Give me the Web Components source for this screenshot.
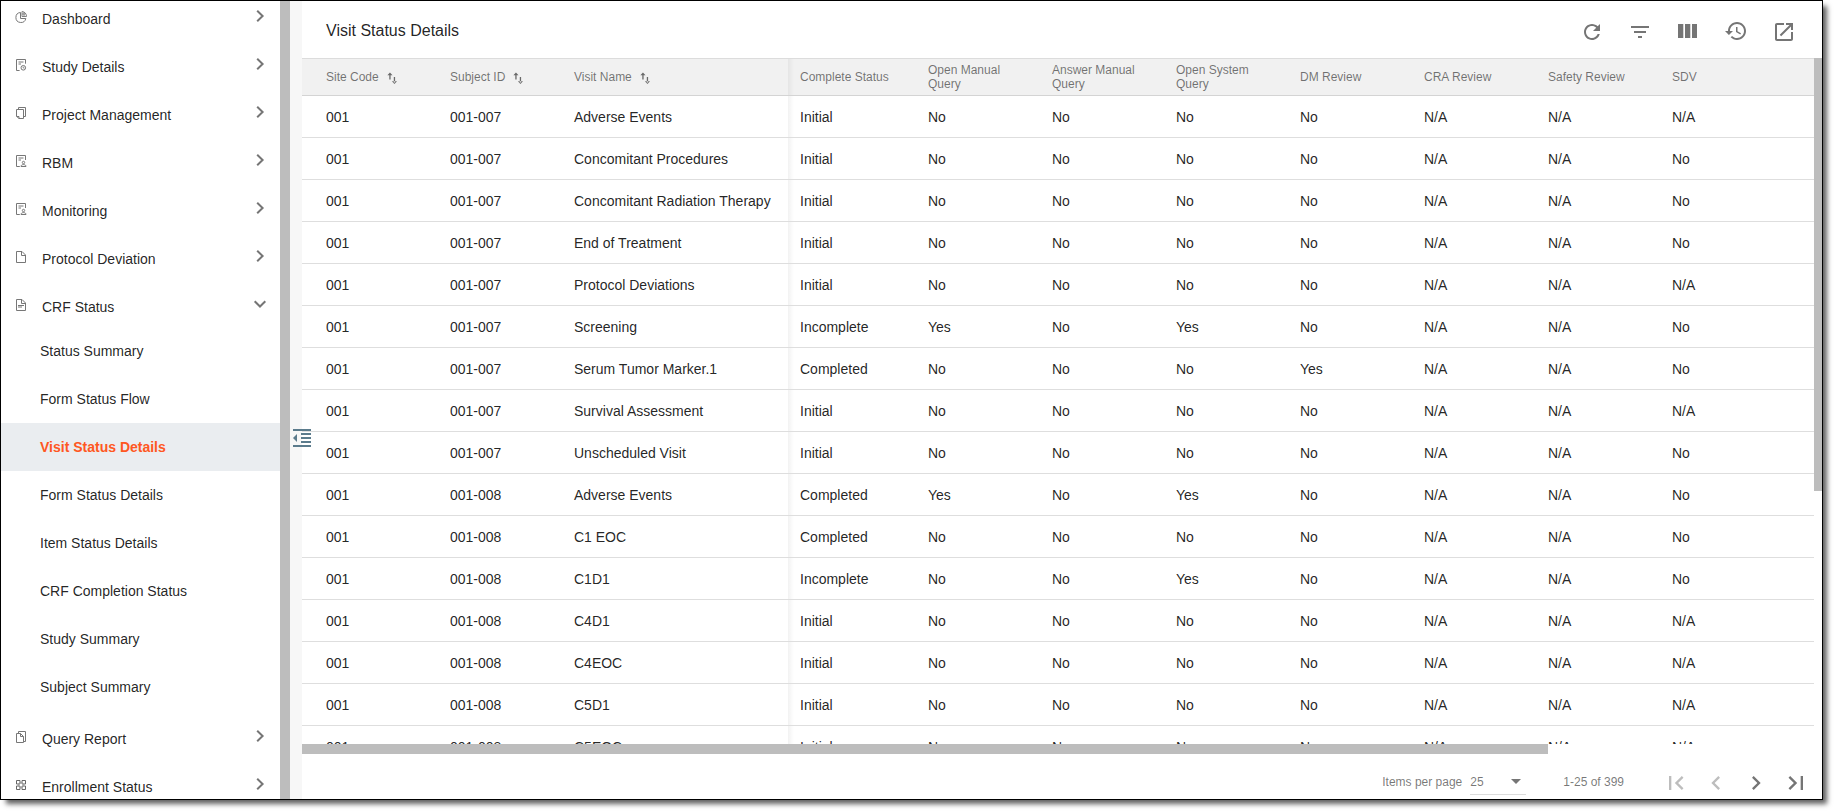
<!DOCTYPE html>
<html lang="en">
<head>
<meta charset="utf-8">
<title>Visit Status Details</title>
<style>
html,body{margin:0;height:100%;background:#fff;overflow:hidden}
body{font:14px/16px "Liberation Sans",Arial,sans-serif;color:rgba(0,0,0,.87)}
</style>
</head>
<body>
<app-shell>
  <side-nav slot="nav">
    <nav-item icon="pie">Dashboard</nav-item>
    <nav-item icon="clock">Study Details</nav-item>
    <nav-item icon="copy">Project Management</nav-item>
    <nav-item icon="person">RBM</nav-item>
    <nav-item icon="person">Monitoring</nav-item>
    <nav-item icon="file">Protocol Deviation</nav-item>
    <nav-item icon="filetext" open>CRF Status</nav-item>
    <nav-sub>Status Summary</nav-sub>
    <nav-sub>Form Status Flow</nav-sub>
    <nav-sub active>Visit Status Details</nav-sub>
    <nav-sub>Form Status Details</nav-sub>
    <nav-sub>Item Status Details</nav-sub>
    <nav-sub>CRF Completion Status</nav-sub>
    <nav-sub>Study Summary</nav-sub>
    <nav-sub>Subject Summary</nav-sub>
    <nav-item icon="query">Query Report</nav-item>
    <nav-item icon="grid">Enrollment Status</nav-item>
  </side-nav>
  <page-header slot="main">Visit Status Details</page-header>
  <data-table slot="main"></data-table>
  <table-paginator slot="main"></table-paginator>
</app-shell>
<script>
const ICONS = {
  pie: ['0 0 12 12', '<g fill="none" stroke="#777"><path d="M5.500 1.500A5 5 0 1 0 10.800 7.500H5.500z"/><path d="M7 .5V5.500h4.500A4.700 4.700 0 0 0 7 .5zM7 3h3.500M9 1v4.500" stroke-width=".9"/></g>'],
  clock: ['0 0 12 12', '<g fill="none" stroke="#777"><path d="M4.600 11.500H1.500V.5h9v4.200M3.500 3h5M3.500 5h2.500"/><circle cx="8.300" cy="8.800" r="2.300"/><path d="M8.200 7.500v1.500h1.300" stroke-width=".8"/></g>'],
  copy: ['0 0 12 12', '<g fill="none" stroke="#777"><path d="M3.500 2V.5h7v9H8.500M1.500 2.500h7v9H4L1.500 9.300z"/><path d="M1.500 9.500h2.500v2"/></g>'],
  person: ['0 0 12 12', '<g fill="none" stroke="#777"><path d="M4.800 11.500H1.500V.5h9V5M3.500 3h5M3.500 5h2.500"/><circle cx="8.500" cy="7.500" r="1.200"/><path d="M6 11.500c0-2.600 5-2.600 5 0z"/></g>'],
  file: ['0 0 12 12', '<g fill="none" stroke="#777"><path d="M1.500.5h5.500l3.500 3.500v7.500h-9z"/><path d="M6.500.5v4h4"/></g>'],
  filetext: ['0 0 12 12', '<g fill="none" stroke="#777"><path d="M1.500.5h5.500l3.500 3.500v7.500h-9z"/><path d="M6.500.5v4h4M3 6.500h6M3 8h4"/></g>'],
  query: ['0 0 12 12', '<g fill="none" stroke="#777"><path d="M3.500 2.500V.5h7v10h-2M1.500 2.500h4l3 3v6h-7z"/><path d="M5.500 2.500v3h3"/></g>'],
  grid: ['0 0 12 12', '<g fill="none" stroke="#666"><path d="M1.500 1.500h3.500v3.500H1.500zM7 1.500h3.500v3.500H7zM1.500 7h3.500v3.500H1.500zM7 7h3.500v3.500H7z"/><circle cx="6" cy="6" r="2.600" stroke="#999" stroke-width=".8"/></g>'],
  right: ['0 0 14 14', '<path d="M4.200 1.700 9.600 7l-5.400 5.300" fill="none" stroke="#757575" stroke-width="2"/>'],
  down: ['0 0 14 14', '<path d="M1.700 4.200 7 9.500l5.300-5.300" fill="none" stroke="#757575" stroke-width="2"/>'],
  refresh: ['0 0 24 24', '<path d="M17.650 6.350C16.200 4.900 14.210 4 12 4c-4.420 0-7.990 3.580-7.990 8s3.570 8 7.990 8c3.730 0 6.840-2.550 7.730-6h-2.080c-.82 2.330-3.040 4-5.650 4-3.310 0-6-2.690-6-6s2.690-6 6-6c1.660 0 3.140.69 4.220 1.780L13 11h7V4l-2.350 2.350z"/>'],
  filter: ['0 0 24 24', '<path d="M10 18h4v-2h-4v2zM3 6v2h18V6H3zm3 7h12v-2H6v2z"/>'],
  columns: ['0 0 24 24', '<path d="M2 4h5.300v14H2zM9 4h5.300v14H9zM16 4h5v14h-5z"/>'],
  history: ['0 1 24 24', '<path d="M13 3c-4.970 0-9 4.030-9 9H1l3.890 3.890.07.14L9 12H6c0-3.870 3.130-7 7-7s7 3.130 7 7-3.130 7-7 7c-1.930 0-3.680-.79-4.940-2.060l-1.420 1.420C8.270 19.990 10.510 21 13 21c4.970 0 9-4.030 9-9s-4.030-9-9-9zm-1 5v5l4.280 2.540.72-1.210-3.500-2.080V8H12z"/>'],
  open: ['0 0 24 24', '<path d="M19 19H5V5h7V3H5c-1.110 0-2 .9-2 2v14c0 1.100.89 2 2 2h14c1.100 0 2-.9 2-2v-7h-2v7zM14 3v2h3.590l-9.830 9.830 1.410 1.410L19 6.410V10h2V3h-7z"/>'],
  sort: ['0 0 12 14', '<path d="M2.300 3h1.300v5.500H2.300zM.4 4.300 2.950 1.500 5.500 4.300zM6.800 6h1.300v5.500H6.800zM4.900 10.200 7.450 13 10 10.200z" fill="#6a6a6a"/>'],
  first: ['0 0 24 24', '<path d="M18.410 16.590L13.820 12l4.590-4.590L17 6l-6 6 6 6zM6 6h2v12H6z"/>'],
  prev: ['0 0 24 24', '<path d="M15.410 7.410L14 6l-6 6 6 6 1.410-1.410L10.830 12z"/>'],
  next: ['0 0 24 24', '<path d="M10 6L8.590 7.410 13.170 12l-4.580 4.590L10 18l6-6z"/>'],
  last: ['0 0 24 24', '<path d="M5.590 7.410L10.180 12l-4.590 4.590L7 18l6-6-6-6zM16 6h2v12h-2z"/>'],
  collapse: ['0 0 18 18', '<path d="M0 0h18v2H0zM8 4h10v2H8zM8 8h10v2H8zM8 12h10v2H8zM0 16h18v2H0zM0 9l4-4v8z"/>']
};

function define(name, css, html, setup) {
  const template = document.createElement('template');
  template.innerHTML = `<style>${css}</style>${html}`;
  customElements.define(name, class extends HTMLElement {
    connectedCallback() {
      if (this.shadowRoot) return;
      this.attachShadow({mode: 'open'}).append(template.content.cloneNode(true));
      if (setup) setup(this.shadowRoot, this);
    }
  });
}

define('ui-icon', `
  :host{display:block;flex:none;width:var(--w,24px);height:var(--h,var(--w,24px));color:#757575}
  svg{display:block;width:100%;height:100%;fill:currentColor}`,
  '<svg></svg>', (root, host) => {
    const [box, body] = ICONS[host.getAttribute('name')];
    const svg = root.querySelector('svg');
    svg.setAttribute('viewBox', box);
    svg.innerHTML = body;
  });

define('app-shell', `
  :host{display:flex;box-sizing:border-box;width:1823px;height:800px;border:1px solid #000;background:#fff;
    box-shadow:5px 5px 5px -1px rgba(0,0,0,.62);position:relative}
  .nav{width:279px;overflow:hidden}
  .bar{width:10px;background:#bdbdbd}
  .gap{width:12px;background:#f7f7f7}
  .main{flex:1;min-width:0;display:flex;flex-direction:column}
  ui-icon{position:absolute;left:292px;top:428px;--w:18px;color:#5b7b8c}`,
  `<div class="nav"><slot name="nav"></slot></div><div class="bar"></div><div class="gap"></div>
   <div class="main"><slot name="main"></slot></div><ui-icon name="collapse"></ui-icon>`);

define('side-nav', ':host{display:flex;flex-direction:column;margin-top:-10px}', '<slot></slot>');

define('nav-item', `
  :host{display:flex;align-items:center;height:48px;padding:0 13px 0 14px}
  .i{--w:12px;margin:4px 15px 0 0}
  span{flex:1;padding-top:8px}
  .c{--w:14px;margin-top:2px}`,
  '<span><slot></slot></span>', (root, host) => {
    const make = (name, cls) => {
      const el = document.createElement('ui-icon');
      el.setAttribute('name', name);
      el.className = cls;
      return el;
    };
    root.querySelector('span').before(make(host.getAttribute('icon'), 'i'));
    root.append(make(host.hasAttribute('open') ? 'down' : 'right', 'c'));
  });

define('nav-sub', `
  :host{display:flex;align-items:center;height:48px;padding-left:39px}
  :host([active]){background:#eaedf0;color:#ff5722;font-weight:bold}`, '<slot></slot>');

define('page-header', `
  :host{display:flex;align-items:center;height:57px;padding:0 26px 0 24px}
  h1{font-size:16px;line-height:20px;font-weight:400;margin:2px 0 0;flex:1}
  .tools{display:flex;gap:24px;padding-top:5px}`,
  `<h1><slot></slot></h1><div class="tools"><ui-icon name="refresh"></ui-icon><ui-icon name="filter"></ui-icon>
   <ui-icon name="columns"></ui-icon><ui-icon name="history"></ui-icon><ui-icon name="open"></ui-icon></div>`);

const COLUMNS = ['Site Code', 'Subject ID', 'Visit Name', 'Complete Status', 'Open Manual Query',
  'Answer Manual Query', 'Open System Query', 'DM Review', 'CRA Review', 'Safety Review', 'SDV'];
const NO = 'No', YES = 'Yes', NA = 'N/A';
const VISITS = [
  ['007', 'Adverse Events', 'Initial', NO, NO, NO, NA],
  ['007', 'Concomitant Procedures', 'Initial', NO, NO, NO, NO],
  ['007', 'Concomitant Radiation Therapy', 'Initial', NO, NO, NO, NO],
  ['007', 'End of Treatment', 'Initial', NO, NO, NO, NO],
  ['007', 'Protocol Deviations', 'Initial', NO, NO, NO, NA],
  ['007', 'Screening', 'Incomplete', YES, YES, NO, NO],
  ['007', 'Serum Tumor Marker.1', 'Completed', NO, NO, YES, NO],
  ['007', 'Survival Assessment', 'Initial', NO, NO, NO, NA],
  ['007', 'Unscheduled Visit', 'Initial', NO, NO, NO, NO],
  ['008', 'Adverse Events', 'Completed', YES, YES, NO, NO],
  ['008', 'C1 EOC', 'Completed', NO, NO, NO, NO],
  ['008', 'C1D1', 'Incomplete', NO, YES, NO, NO],
  ['008', 'C4D1', 'Initial', NO, NO, NO, NA],
  ['008', 'C4EOC', 'Initial', NO, NO, NO, NA],
  ['008', 'C5D1', 'Initial', NO, NO, NO, NA],
  ['008', 'C5EOC', 'Initial', NO, NO, NO, NA]
].map(([id, visit, status, manual, system, dm, sdv]) =>
  ['001', '001-' + id, visit, status, manual, NO, system, dm, NA, NA, sdv]);

define('data-table', `
  :host{display:flex;height:696px}
  .body{flex:1;min-width:0;display:flex;flex-direction:column}
  .rows{flex:1;min-height:0;overflow:hidden}
  .row{display:grid;grid-template-columns:124px 124px 214px 140px repeat(5,124px) 124px 1fr;
    box-sizing:border-box;height:42px;padding-left:24px;border-bottom:1px solid #dedede;align-items:stretch}
  .row>div{display:flex;align-items:center;white-space:nowrap;padding-top:1px}
  .row>div:nth-child(4){padding-left:12px;background:linear-gradient(90deg,rgba(0,0,0,.05),transparent) 0 0/6px 100% no-repeat}
  .head{height:38px;background:#f1f1f1;border-top:1px solid #dcdcdc;border-bottom-color:#d4d4d4;color:rgba(0,0,0,.54);font-size:12px;line-height:14px}
  .head>div{white-space:normal;padding-right:24px;padding-top:0}
  .head>div:nth-child(4){padding-right:0}
  .head ui-icon{--w:12px;--h:14px;margin:2px 0 0 8px}
  .v{width:8px}.v i{display:block;height:433px;background:#bdbdbd}
  .h{height:10px}.h i{display:block;width:1246px;height:10px;background:#bdbdbd}`,
  '<div class="body"><div class="rows"></div><div class="h"><i></i></div></div><div class="v"><i></i></div>',
  root => {
    const sort = '<ui-icon name="sort"></ui-icon>';
    const head = `<div class="row head">${COLUMNS.map((c, i) => `<div>${c}${i < 3 ? sort : ''}</div>`).join('')}</div>`;
    root.querySelector('.rows').innerHTML = head +
      VISITS.map(r => `<div class="row">${r.map(c => `<div>${c}</div>`).join('')}</div>`).join('');
  });

define('table-paginator', `
  :host{display:flex;align-items:center;height:45px;justify-content:flex-end;padding:11px 12px 0 0;
    box-sizing:border-box;font-size:12px;color:rgba(0,0,0,.54)}
  .select{display:flex;box-sizing:border-box;align-items:center;justify-content:space-between;width:56px;height:26px;
    margin:0 37px 0 8px;padding-right:5px;border-bottom:1px solid #dcdcdc}
  .select i{border:5px solid transparent;border-top-color:#757575;border-bottom:0}
  .pages{display:flex;gap:12px;margin:2px 0 0 38px}
  .pages ui-icon{--w:28px}
  .off{color:#bdbdbd}`,
  `<span>Items per page</span><div class="select"><span>25</span><i></i></div><span>1-25 of 399</span>
   <div class="pages"><ui-icon name="first" class="off"></ui-icon><ui-icon name="prev" class="off"></ui-icon>
   <ui-icon name="next"></ui-icon><ui-icon name="last"></ui-icon></div>`);
</script>
</body>
</html>
